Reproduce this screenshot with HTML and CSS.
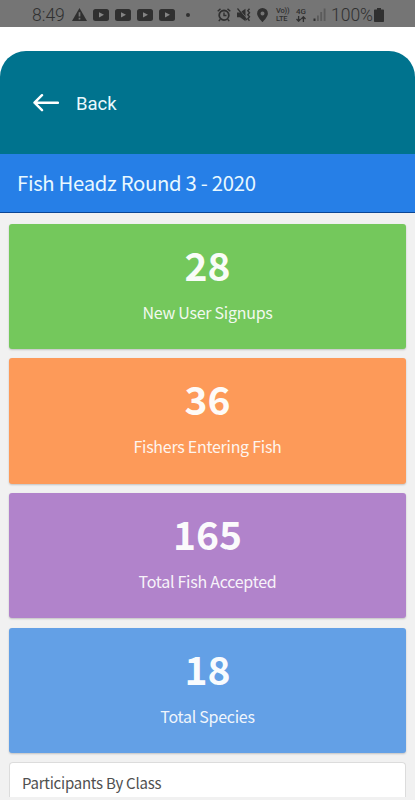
FILE: index.html
```html
<!DOCTYPE html>
<html lang="en">
<head>
<meta charset="utf-8">
<title>Fish Headz Round 3 - 2020</title>
<link rel="stylesheet" href="styles.css">
</head>
<body>
<svg class="defs" width="0" height="0">
  <symbol id="video" viewBox="0 0 16 12"><rect width="16" height="12" rx="2.5" fill="#303030"/><path d="M6 3.2v5.2l5-2.6z" fill="#858585"/></symbol>
</svg>
<div class="status">
  <div class="status-left">
    <span class="time">8:49</span>
    <svg class="warn" width="15" height="13" viewBox="0 0 15 13"><path d="M7.5 0 15 13H0z" fill="#303030"/><path d="M7.5 4.2v4.2M7.5 9.7v1.7" stroke="#757575" stroke-width="1.7"/></svg>
    <div class="videos">
      <svg width="16" height="12"><use href="#video"/></svg>
      <svg width="16" height="12"><use href="#video"/></svg>
      <svg width="16" height="12"><use href="#video"/></svg>
      <svg width="16" height="12"><use href="#video"/></svg>
    </div>
    <span class="dot"></span>
  </div>
  <div class="status-right">
    <svg width="14" height="14" viewBox="0 0 14 14" fill="none" stroke="#303030"><circle cx="7" cy="7.3" r="4.8" stroke-width="1.8"/><path d="M7 4.5v3h2.5M.7 3.3 3.5.9M10.5.9l2.8 2.4M3.3 11.2l-1.5 1.9M10.7 11.2l1.5 1.9" stroke-width="1.4"/></svg>
    <svg class="mute" width="14" height="14" viewBox="0 0 14 14" fill="none" stroke="#303030"><path d="M0 4.5h3L8.5.8v12.4L3 9.3H0z" fill="#303030" stroke="none"/><path d="M1.5.5 10.5 11.5" stroke="#757575"/><path d="M.5.5 9.8 12" stroke-width="1.2"/><path d="m12.5.8-1.7 2 1.7 2-1.7 2 1.7 2-1.7 2 1.7 2" stroke-width="1.4"/></svg>
    <svg class="pin" width="11" height="14" viewBox="0 0 11 14"><path d="M5.5 0A5.4 5.4 0 0 0 .1 5.4C.1 9 5.5 14 5.5 14s5.4-5 5.4-8.6A5.4 5.4 0 0 0 5.5 0zm0 3.4a2 2 0 1 1 0 4 2 2 0 0 1 0-4z" fill="#303030" fill-rule="evenodd"/></svg>
    <div class="volte"><span>Vo))</span><span>LTE</span></div>
    <div class="network"><span>4G</span><svg width="10" height="6" viewBox="0 0 10 6" fill="none" stroke="#303030" stroke-width="1.3"><path d="M2.6 0v5M.5 3l2.1 2.2L4.7 3M7.4 6V1M5.3 3l2.1-2.2L9.500 3"/></svg></div>
    <svg class="signal" width="13" height="13" viewBox="0 0 13 13"><path d="M.5 10.5h2V13h-2z" fill="#303030"/><path d="M4 7.5h1.8V13H4zM7.3 4h1.8v9H7.3zM10.7.5h1.8V13h-1.8z" fill="#5b5b5b"/></svg>
    <span class="percent">100%</span>
    <svg class="battery" width="10" height="14" viewBox="0 0 10 14"><path d="M3 0h4v1.5h2.2q.8 0 .8.8v10.900q0 .8-.8.8H.8q-.8 0-.8-.8V2.300q0-.8.8-.8H3z" fill="#303030"/></svg>
  </div>
</div>
<header class="header">
  <svg width="26" height="18" viewBox="0 0 26 18" fill="none" stroke="#fff" stroke-width="2.4" stroke-linecap="round" stroke-linejoin="round"><path d="M25 8.7H1.8M9 1.2 1.5 8.7 9 16.2"/></svg>
  <span class="back">Back</span>
</header>
<main>
  <h1 class="title">Fish Headz Round 3 - 2020</h1>
  <div class="cards">
    <section class="stat green"><strong>28</strong><span>New User Signups</span></section>
    <section class="stat orange"><strong>36</strong><span>Fishers Entering Fish</span></section>
    <section class="stat purple"><strong>165</strong><span>Total Fish Accepted</span></section>
    <section class="stat blue"><strong>18</strong><span>Total Species</span></section>
    <section class="panel">Participants By Class</section>
  </div>
</main>
</body>
</html>
```
FILE: styles.css
```css
* { box-sizing: border-box; }
body {
  margin: 0;
  height: 800px;
  overflow: hidden;
  background: #fff;
  font-family: "Noto Sans CJK SC", "Noto Sans", sans-serif;
}
svg { display: block; flex: none; }
.defs { position: absolute; }
.status {
  height: 27px;
  padding: 2px 31px 0 32px;
  background: #757575;
  color: #303030;
  display: flex;
  justify-content: space-between;
  font-family: Roboto, sans-serif;
}
.status-left, .status-right { display: flex; align-items: center; height: 25px; }
.time { width: 40px; font-size: 17.5px; font-weight: 300; line-height: 24px; }
.warn { margin-right: 6px; }
.videos { display: flex; gap: 6px; }
.dot { width: 4px; height: 4px; margin-left: 11px; border-radius: 50%; background: #303030; }
.mute { margin-left: 6px; }
.pin { margin-left: 6px; }
.volte, .network { display: flex; flex-direction: column; font-weight: 500; white-space: nowrap; }
.volte { width: 14px; margin-left: 8px; font-size: 7.5px; line-height: 7.5px; letter-spacing: -.2px; }
.network { width: 10px; margin-left: 6px; font-size: 8px; line-height: 8px; }
.signal { margin-left: 7px; }
.percent { width: 42px; margin-left: 5px; font-size: 17.5px; font-weight: 300; line-height: 24px; white-space: nowrap; }
.battery { margin-left: 1px; }
.header {
  height: 103px;
  margin-top: 24px;
  padding: 0 33px;
  display: flex;
  align-items: center;
  gap: 17px;
  background: #00738e;
  border-radius: 26px 26px 0 0;
  color: #eaf9fd;
}
.back { padding-top: 2px; font: 400 18.5px/24px Roboto, sans-serif; }
main { height: 646px; background: #f1f1f1; }
.title {
  height: 59px;
  margin: 0;
  padding: 0 17px;
  background: #267fe7;
  border-bottom: 1px solid #0b4695;
  color: #e8f8ff;
  font-size: 20.3px;
  font-weight: 400;
  letter-spacing: -.3px;
  line-height: 56px;
  white-space: nowrap;
}
.cards { padding: 10.5px 9px 0; display: flex; flex-direction: column; gap: 9.2px; }
.stat {
  height: 125.5px;
  padding-top: 14px;
  display: flex;
  flex-direction: column;
  align-items: center;
  border-radius: 3px;
  box-shadow: 0 1px 2px rgba(0, 0, 0, .2);
  color: #fff;
}
.stat strong { font-size: 39px; line-height: 52px; opacity: .96; }
.stat span { margin-top: 10px; font-size: 16px; letter-spacing: -.27px; line-height: 24px; opacity: .9; }
.green { background: #74c85c; }
.orange { background: #fd9a59; }
.purple { background: #b183cb; }
.blue { background: #63a0e6; }
.panel {
  height: 34.5px;
  padding: 8px 12px 0;
  background: #fff;
  border: 1px solid #dcdcdc;
  border-bottom: 0;
  border-radius: 4px 4px 0 0;
  color: #505050;
  font-size: 15px;
  letter-spacing: -.24px;
  line-height: 23px;
}
```
